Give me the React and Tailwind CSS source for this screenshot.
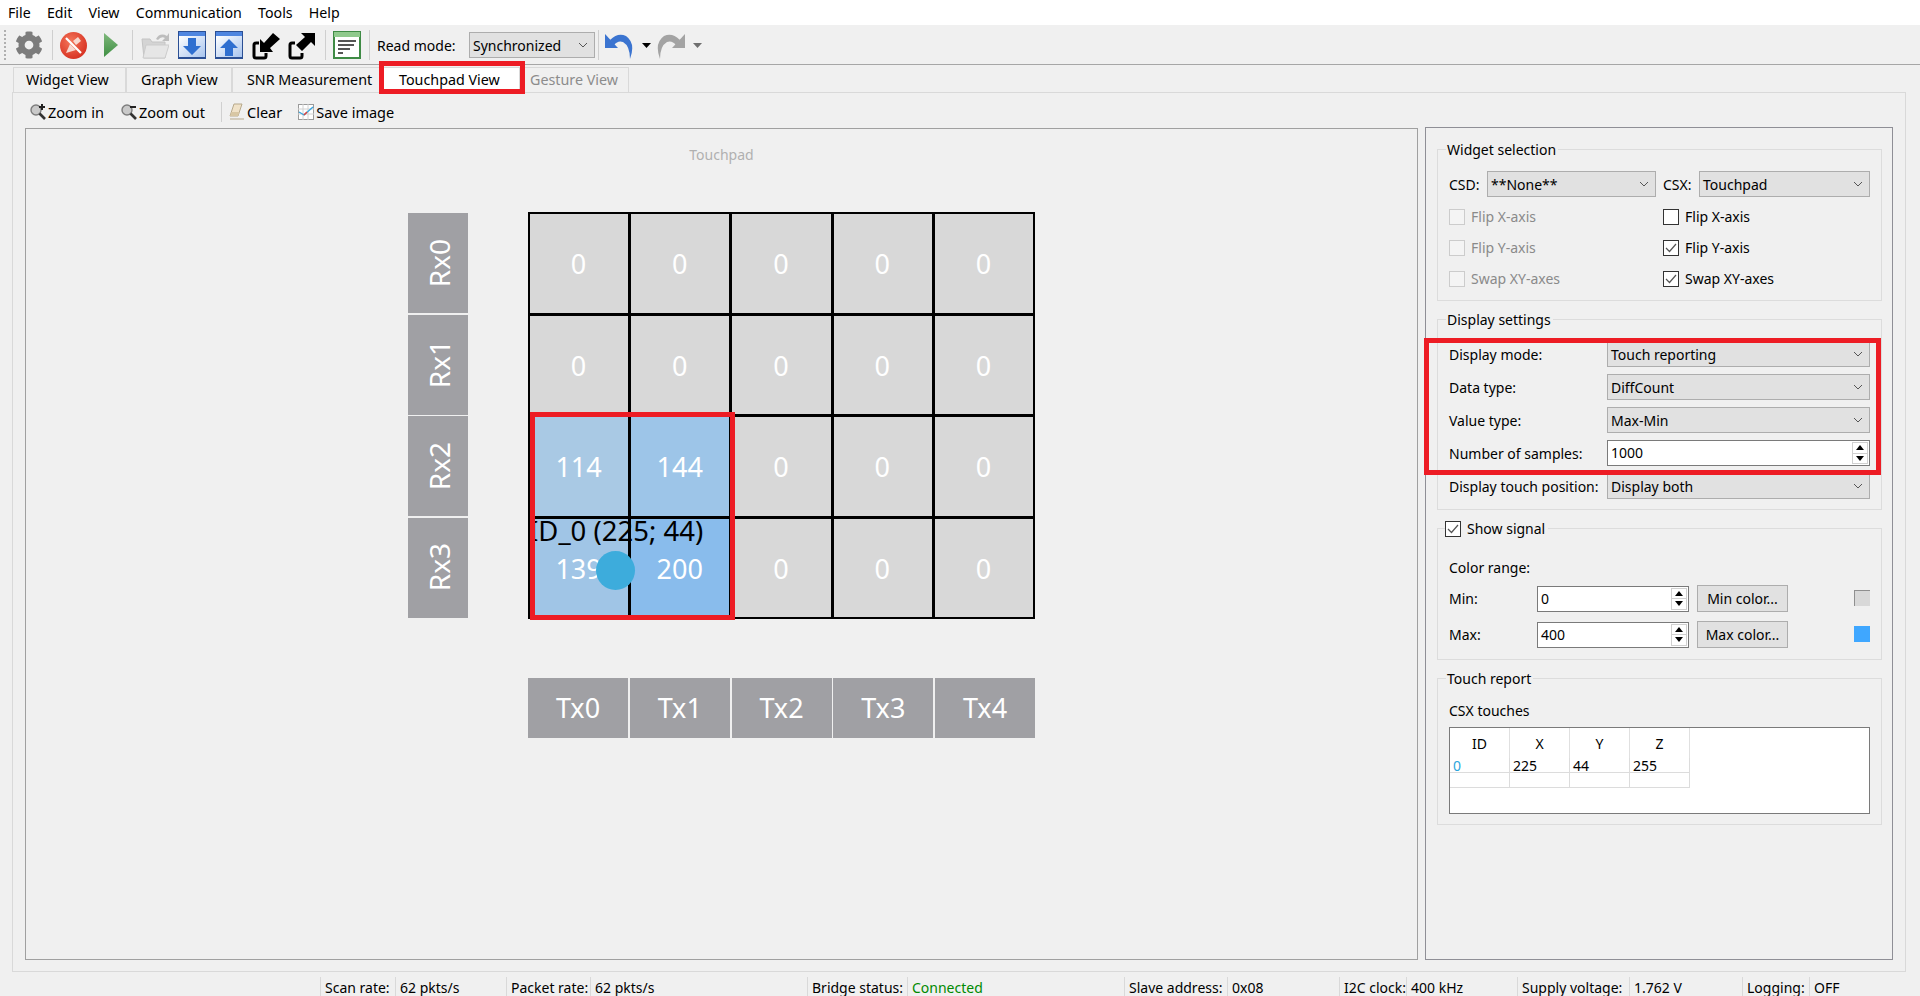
import { FaCog } from 'react-icons/fa'

const MENU = ['File', 'Edit', 'View', 'Communication', 'Tools', 'Help']

const TABS = [
    { label: 'Widget View', className: 'w-[113px] bg-[#f0f0f0] text-black pl-[12px]' },
    { label: 'Graph View', className: 'w-[106px] bg-[#f0f0f0] text-black pl-[14px]' },
    { label: 'SNR Measurement', className: 'w-[148px] bg-[#f0f0f0] text-black pl-[14px]' },
    { label: 'Touchpad View', className: 'w-[140px] bg-white text-black pl-[18px]' },
    { label: 'Gesture View', className: 'w-[109px] bg-[#f0f0f0] text-[#8c8c8c] pl-[9px]' },
]

const ROWS = [
    [{ v: '0' }, { v: '0' }, { v: '0' }, { v: '0' }, { v: '0' }],
    [{ v: '0' }, { v: '0' }, { v: '0' }, { v: '0' }, { v: '0' }],
    [{ v: '114', bg: 'bg-[#a9c9e4]' }, { v: '144', bg: 'bg-[#9dc5e8]' }, { v: '0' }, { v: '0' }, { v: '0' }],
    [{ v: '139', bg: 'bg-[#a0c5e6]' }, { v: '200', bg: 'bg-[#89bcec]' }, { v: '0' }, { v: '0' }, { v: '0' }],
]

const STATUS = [
    { text: 'Scan rate:', className: 'w-[75px]' },
    { text: '62 pkts/s', className: 'w-[111px]' },
    { text: 'Packet rate:', className: 'w-[84px]' },
    { text: '62 pkts/s', className: 'w-[217px]' },
    { text: 'Bridge status:', className: 'w-[100px]' },
    { text: 'Connected', className: 'w-[217px] text-[#008a00]' },
    { text: 'Slave address:', className: 'w-[103px]' },
    { text: '0x08', className: 'w-[112px]' },
    { text: 'I2C clock:', className: 'w-[67px]' },
    { text: '400 kHz', className: 'w-[111px]' },
    { text: 'Supply voltage:', className: 'w-[112px]' },
    { text: '1.762 V', className: 'w-[113px]' },
    { text: 'Logging:', className: 'w-[67px]' },
    { text: 'OFF', className: 'w-[96px]' },
]

const TOUCHES = [['0', '225', '44', '255'], ['', '', '', '']]

const StopIcon = () => (
    <svg width="27" height="27" viewBox="0 0 27 27">
        <defs>
            <radialGradient id="stopFill" cx="0.4" cy="0.35" r="0.75">
                <stop offset="0" stopColor="#f4765a" />
                <stop offset="1" stopColor="#d42a1c" />
            </radialGradient>
        </defs>
        <circle cx="13.5" cy="13.5" r="13.5" fill="url(#stopFill)" />
        <path d="M6 21 L10 12 L16 18 Z" fill="#f7d8cf" />
        <path d="M13 9 L18 5 L21 9 L16 13 Z" fill="#f7d8cf" />
        <path d="M6 6 L21 21" stroke="#fff" strokeWidth="2.2" />
    </svg>
)

const PlayIcon = () => (
    <svg width="14" height="24" viewBox="0 0 14 24">
        <defs>
            <linearGradient id="playFill" x1="0" y1="0" x2="0" y2="1">
                <stop offset="0" stopColor="#7fb87c" />
                <stop offset="1" stopColor="#3f8f43" />
            </linearGradient>
        </defs>
        <path d="M0 0 L14 12 L0 24 Z" fill="url(#playFill)" />
    </svg>
)

const FolderIcon = () => (
    <svg width="28" height="27" viewBox="0 0 28 27">
        <path d="M15 7 Q19 0 26 4 L28 1 L28 9 L21 9 L24 6 Q20 4 17 8 Z" fill="#bdbdbd" />
        <path d="M1 7 H9 L11 10 H24 V26 H3 Z" fill="#d4d4d4" stroke="#c4c4c4" />
        <path d="M5 13 H28 L24 26 H2 Z" fill="#e6e6e6" stroke="#cccccc" />
    </svg>
)

const TransferIcon = ({ up }) => (
    <svg width="28" height="28" viewBox="0 0 28 28">
        <defs>
            <linearGradient id={up ? 'upFill' : 'downFill'} x1="0" y1="0" x2="1" y2="1">
                <stop offset="0" stopColor="#ffffff" />
                <stop offset="1" stopColor="#a8c4ee" />
            </linearGradient>
        </defs>
        <rect x="0" y="0" width="28" height="28" fill="#2b4f94" />
        <rect x="1" y="1" width="26" height="4" fill="#4f86e0" />
        <rect x="1" y="5" width="26" height="21" fill={`url(#${up ? 'upFill' : 'downFill'})`} />
        {up
            ? <path d="M14 8 L23 17 H18 V25 H10 V17 H5 Z" fill="#2f6fd0" />
            : <path d="M10 7 H18 V15 H23 L14 24 L5 15 H10 Z" fill="#2f6fd0" />}
    </svg>
)

const Bracket = () => (
    <path d="M7 12 H4 Q2 12 2 14 V25 Q2 27 4 27 H12 Q14 27 14 25 V22" fill="none" stroke="#000" strokeWidth="3" />
)

const ImportIcon = () => (
    <svg width="28" height="29" viewBox="0 0 28 29">
        <Bracket />
        <path d="M8 21 V8 L12 12 L21 2 L28 8 L18 17 L21 21 Z" fill="#000" />
    </svg>
)

const ExportIcon = () => (
    <svg width="27" height="29" viewBox="0 0 27 29">
        <Bracket />
        <path d="M27 2 V15 L23 11 L14 20 L8 14 L17 6 L13 2 Z" fill="#000" />
    </svg>
)

const LogIcon = () => (
    <svg width="28" height="28" viewBox="0 0 28 28">
        <rect x="0" y="0" width="28" height="28" fill="#3f8b45" />
        <rect x="1" y="1" width="26" height="5" fill="#8fc98c" />
        <rect x="2" y="6" width="24" height="20" fill="#fff" />
        <path d="M5 9 H23 V11 H5 Z M5 13 H21 V15 H5 Z M5 17 H17 V19 H5 Z M5 21 H10 V23 H5 Z" fill="#555" />
    </svg>
)

const UndoIcon = ({ flip, color }) => (
    <svg width="28" height="27" viewBox="0 0 28 27" className={flip ? '-scale-x-100' : ''}>
        <path d="M0 2 V16 H13 Z" fill={color} />
        <path d="M5 8 Q13 0 21 4 Q31 11 25 27 Q25 14 18 10 Q13 8 9 13 Z" fill={color} />
    </svg>
)

const MenuArrow = ({ color }) => (
    <svg width="9" height="5" viewBox="0 0 9 5">
        <path d="M0 0 H9 L4.5 5 Z" fill={color} />
    </svg>
)

const Magnifier = ({ plus }) => (
    <svg width="16" height="16" viewBox="0 0 16 16">
        <circle cx="6" cy="6" r="5" fill="#c9c9c9" stroke="#7d7d7d" strokeWidth="1.4" />
        <path d="M9.5 9.5 L15 15" stroke="#333" strokeWidth="2.6" />
        <path d={plus ? 'M9 3 H15 M12 0 V6' : 'M9 3 H15'} stroke="#222" strokeWidth="2" />
    </svg>
)

const EraserIcon = () => (
    <svg width="16" height="17" viewBox="0 0 16 17">
        <path d="M5 1 H13 L9 13 H1 Z" fill="#f0e2c8" stroke="#b7a98c" />
        <path d="M2.5 9 H10.5 L9 13 H1 Z" fill="#d8c7a4" />
        <path d="M1 16 H15" stroke="#b7a98c" />
    </svg>
)

const ChartIcon = () => (
    <svg width="16" height="16" viewBox="0 0 16 16">
        <rect x="0.5" y="0.5" width="15" height="15" fill="#fff" stroke="#9a9a9a" />
        <path d="M0 5 H16 M0 10 H16 M5 0 V16 M10 0 V16" stroke="#d2d2d2" />
        <path d="M1 8 L6 11 L15 3" fill="none" stroke="#39a6e0" strokeWidth="1.4" />
        <path d="M6 11 L9 8" stroke="#e0403a" strokeWidth="1.4" />
    </svg>
)

const Chevron = () => (
    <svg width="10" height="6" viewBox="0 0 10 6" className="shrink-0">
        <path d="M1 1 L5 5 L9 1" fill="none" stroke="#555" strokeWidth="1" />
    </svg>
)

const Combo = ({ value, className }) => (
    <div className={`flex h-[26px] items-center justify-between border border-[#adadad] bg-[#e1e1e1] pl-[3px] pr-[6px] ${className}`}>
        <span className="pt-[1px]">{value}</span>
        <Chevron />
    </div>
)

const Spin = ({ value, className }) => (
    <div className={`flex h-[26px] items-center justify-between border border-[#7a7a7a] bg-white pl-[3px] pr-[1px] ${className}`}>
        <span>{value}</span>
        <div className="flex h-[22px] w-[16px] flex-col border border-[#d0d0d0]">
            <div className="flex flex-1 items-center justify-center border-b border-[#d0d0d0]">
                <svg width="8" height="5" viewBox="0 0 8 5"><path d="M0 5 L4 0 L8 5 Z" fill="#000" /></svg>
            </div>
            <div className="flex flex-1 items-center justify-center">
                <svg width="8" height="5" viewBox="0 0 8 5"><path d="M0 0 L8 0 L4 5 Z" fill="#000" /></svg>
            </div>
        </div>
    </div>
)

const Box = ({ checked, disabled }) => (
    <div className={`flex h-[16px] w-[16px] shrink-0 items-center justify-center border ${disabled ? 'border-[#cccccc] bg-[#f4f4f4]' : 'border-[#333333] bg-white'}`}>
        {checked && (
            <svg width="12" height="10" viewBox="0 0 12 10">
                <path d="M1 5 L4.5 8.5 L11 1" fill="none" stroke="#555" strokeWidth="1.2" />
            </svg>
        )}
    </div>
)

const Check = ({ label, checked, disabled }) => (
    <div className={`flex h-[31px] items-center gap-[6px] ${disabled ? 'text-[#8a8a8a]' : 'text-black'}`}>
        <Box checked={checked} disabled={disabled} />
        <span>{label}</span>
    </div>
)

const Group = ({ title, className, children }) => (
    <div className={`relative border border-[#dcdcdc] px-[11px] ${className}`}>
        <div className="absolute -top-[9px] left-[8px] bg-[#f0f0f0] pl-[1px] pr-[2px]">{title}</div>
        {children}
    </div>
)

const SettingRow = ({ label, children }) => (
    <div className="flex items-center">
        <span className="w-[158px] shrink-0 pt-[1px]">{label}</span>
        {children}
    </div>
)

const RangeRow = ({ label, value, button, swatch, className }) => (
    <div className={`flex h-[27px] items-center ${className}`}>
        <span className="w-[88px] shrink-0">{label}</span>
        <Spin value={value} className="w-[152px]" />
        <div className="ml-[8px] flex h-[27px] w-[91px] items-center justify-center border border-[#adadad] bg-[#e1e1e1]">{button}</div>
        <div className={`mb-[2px] ml-auto h-[16px] w-[16px] ${swatch}`} />
    </div>
)

const Touchpad = () => (
    <div className="relative ml-[382px] mt-[47px] w-[627px]">
        <div className="flex gap-[60px]">
            <div className="mt-[1px] flex w-[60px] flex-col gap-[1.5px]">
                {['Rx0', 'Rx1', 'Rx2', 'Rx3'].map(name => (
                    <div key={name} className="flex h-[100px] items-center justify-center bg-[#a0a0a4] pl-[2px] text-[28px] text-white">
                        <span className="rotate-180 [writing-mode:vertical-rl]">{name}</span>
                    </div>
                ))}
            </div>
            <div className="grid h-[407px] w-[507px] grid-cols-5 grid-rows-4 gap-[3px] bg-black p-[2px]">
                {ROWS.flat().map((cell, i) => (
                    <div key={i} className={`flex items-center justify-center pr-[1px] pt-[2px] text-[27px] text-white ${cell.bg || 'bg-[#d8d8d8]'}`}>
                        {cell.v}
                    </div>
                ))}
            </div>
        </div>
        <div className="ml-[120px] mt-[59px] flex gap-[1.75px]">
            {['Tx0', 'Tx1', 'Tx2', 'Tx3', 'Tx4'].map(name => (
                <div key={name} className="flex h-[60px] w-[100px] items-center justify-center bg-[#a0a0a4] text-[27px] text-white">
                    {name}
                </div>
            ))}
        </div>
        <div className="absolute left-[121px] top-[301px] whitespace-nowrap text-[27.5px] leading-[36px] text-black">ID_0 (225; 44)</div>
        <div className="absolute left-[188px] top-[339px] h-[39px] w-[39px] rounded-full bg-[#3dacdc]" />
        <div className="absolute left-[122px] top-[200px] h-[208px] w-[205px] border-[5px] border-[#ed1c24]" />
    </div>
)

const SidePanel = () => (
    <div className="-mt-px flex h-[833px] w-[468px] flex-col gap-[18px] border border-[#8f8f96] pl-[11px] pr-[10px] pt-[21px]">
        <Group title="Widget selection" className="h-[152px] shrink-0 pt-[21px]">
            <div className="flex gap-[7px]">
                <div className="flex w-[207px] items-center">
                    <span className="w-[38px] pt-[1px]">CSD:</span>
                    <Combo value="**None**" className="w-[169px]" />
                </div>
                <div className="flex w-[207px] items-center">
                    <span className="w-[36px] pt-[1px]">CSX:</span>
                    <Combo value="Touchpad" className="w-[171px]" />
                </div>
            </div>
            <div className="mt-[4px] grid grid-cols-2 gap-x-[7px]">
                <Check label="Flip X-axis" disabled />
                <Check label="Flip X-axis" />
                <Check label="Flip Y-axis" disabled />
                <Check label="Flip Y-axis" checked />
                <Check label="Swap XY-axes" disabled />
                <Check label="Swap XY-axes" checked />
            </div>
        </Group>
        <Group title="Display settings" className="flex h-[191px] shrink-0 flex-col gap-[7px] pt-[21px]">
            <SettingRow label="Display mode:"><Combo value="Touch reporting" className="w-[263px]" /></SettingRow>
            <SettingRow label="Data type:"><Combo value="DiffCount" className="w-[263px]" /></SettingRow>
            <SettingRow label="Value type:"><Combo value="Max-Min" className="w-[263px]" /></SettingRow>
            <SettingRow label="Number of samples:"><Spin value="1000" className="w-[263px]" /></SettingRow>
            <SettingRow label="Display touch position:"><Combo value="Display both" className="w-[263px]" /></SettingRow>
        </Group>
        <div className="relative h-[132px] shrink-0 border border-[#dcdcdc] px-[11px] pt-[29px]">
            <div className="absolute -top-[9px] left-[7px] flex items-center gap-[6px] bg-[#f0f0f0] pr-[3px]">
                <Box checked />
                <span>Show signal</span>
            </div>
            <div className="h-[20px] leading-[20px]">Color range:</div>
            <RangeRow label="Min:" value="0" button="Min color..." swatch="border-l border-t border-[#8f8f8f] bg-[#d8d8d8]" className="mt-[7px]" />
            <RangeRow label="Max:" value="400" button="Max color..." swatch="bg-[#3fa7ff]" className="mt-[9px]" />
        </div>
        <Group title="Touch report" className="h-[147px] shrink-0 pt-[22px]">
            <div className="h-[20px] leading-[20px]">CSX touches</div>
            <div className="mt-[6px] h-[87px] border border-[#7a7a7a] bg-white">
                <div className="grid w-[240px] grid-cols-4">
                    {['ID', 'X', 'Y', 'Z'].map(h => (
                        <div key={h} className="flex h-[30px] items-center justify-center border-r border-[#e0e0e0] pt-[1px]">{h}</div>
                    ))}
                    {TOUCHES.map((row, r) => row.map((v, c) => (
                        <div key={`${r}-${c}`} className={`h-[15px] border-b border-r border-[#dcdcdc] pl-[3px] leading-[15px] ${c === 0 ? 'text-[#2ba5dc]' : 'text-black'}`}>{v}</div>
                    )))}
                </div>
            </div>
        </Group>
    </div>
)

const App = () => {
    return (
        <div className="relative flex h-[996px] w-[1920px] flex-col overflow-hidden bg-[#f0f0f0] font-['Noto_Sans',sans-serif] text-[14px] leading-[18px] text-black">
            <div className="flex h-[25px] shrink-0 items-center gap-[16.2px] bg-white pl-[8px] text-[14.2px]">
                {MENU.map(item => <span key={item}>{item}</span>)}
            </div>

            <div className="flex h-[40px] shrink-0 items-center border-b border-[#a6a6a6] pt-[1px]">
                <div className="ml-[4px] h-[30px] w-[3px] border-l-2 border-dotted border-[#b0b0b0]" />
                <div className="ml-[8px]"><FaCog size={28} color="#7c7c7c" /></div>
                <div className="ml-[9px] h-[30px] w-px bg-[#cfcfcf]" />
                <div className="ml-[7px]"><StopIcon /></div>
                <div className="ml-[17px]"><PlayIcon /></div>
                <div className="ml-[14px] h-[30px] w-px bg-[#cfcfcf]" />
                <div className="ml-[8px]"><FolderIcon /></div>
                <div className="ml-[9px]"><TransferIcon /></div>
                <div className="ml-[9px]"><TransferIcon up /></div>
                <div className="ml-[9px]"><ImportIcon /></div>
                <div className="ml-[8px]"><ExportIcon /></div>
                <div className="ml-[10px] h-[30px] w-px bg-[#cfcfcf]" />
                <div className="ml-[7px]"><LogIcon /></div>
                <div className="ml-[8px] h-[30px] w-px bg-[#cfcfcf]" />
                <span className="ml-[7px] w-[92px] shrink-0 pt-[1px]">Read mode:</span>
                <Combo value="Synchronized" className="w-[126px]" />
                <div className="ml-[3px] h-[30px] w-px bg-[#cfcfcf]" />
                <div className="ml-[6px]"><UndoIcon color="#3b74d0" /></div>
                <div className="ml-[9px]"><MenuArrow color="#000" /></div>
                <div className="ml-[6px]"><UndoIcon flip color="#a3a3a3" /></div>
                <div className="ml-[8px]"><MenuArrow color="#6f6f6f" /></div>
            </div>

            <div className="relative ml-[13px] mt-[2px] flex h-[25px] w-fit shrink-0 text-[14.3px]">
                {TABS.map(tab => (
                    <div key={tab.label} className={`flex items-center border border-b-0 border-[#d9d9d9] ${tab.className}`}>
                        {tab.label}
                    </div>
                ))}
                <div className="absolute -top-[6px] left-[366px] h-[33px] w-[146px] border-[5px] border-[#ed1c24]" />
            </div>

            <div className="ml-[12px] mr-[14px] flex h-[880px] shrink-0 flex-col border border-[#d9d9d9]">
                <div className="flex h-[35px] shrink-0 items-center pl-[17px] pt-[2px] text-[14.5px]">
                    <Magnifier plus />
                    <span className="ml-[2px]">Zoom in</span>
                    <div className="ml-[17px]"><Magnifier /></div>
                    <span className="ml-[2px]">Zoom out</span>
                    <div className="ml-[16px] h-[20px] w-px bg-[#d0d0d0]" />
                    <div className="ml-[7px]"><EraserIcon /></div>
                    <span className="ml-[2px]">Clear</span>
                    <div className="ml-[16px]"><ChartIcon /></div>
                    <span className="ml-[2px]">Save image</span>
                </div>
                <div className="flex gap-[7px] pl-[12px]">
                    <div className="flex h-[832px] w-[1393px] flex-col border border-[#a0a0a0]">
                        <div className="mt-[16px] h-[20px] text-center leading-[20px] text-[#b0b0b0]">Touchpad</div>
                        <Touchpad />
                    </div>
                    <SidePanel />
                </div>
            </div>

            <div className="ml-[320px] flex h-[24px] shrink-0">
                {STATUS.map((item, i) => (
                    <div key={i} className={`mt-[5px] shrink-0 whitespace-nowrap border-l border-[#d9d9d9] pl-[4px] pt-[2px] ${item.className}`}>
                        {item.text}
                    </div>
                ))}
            </div>

            <div className="absolute left-[1424px] top-[338px] h-[137px] w-[457px] border-[5px] border-[#ed1c24]" />
        </div>
    )
}

export default App
